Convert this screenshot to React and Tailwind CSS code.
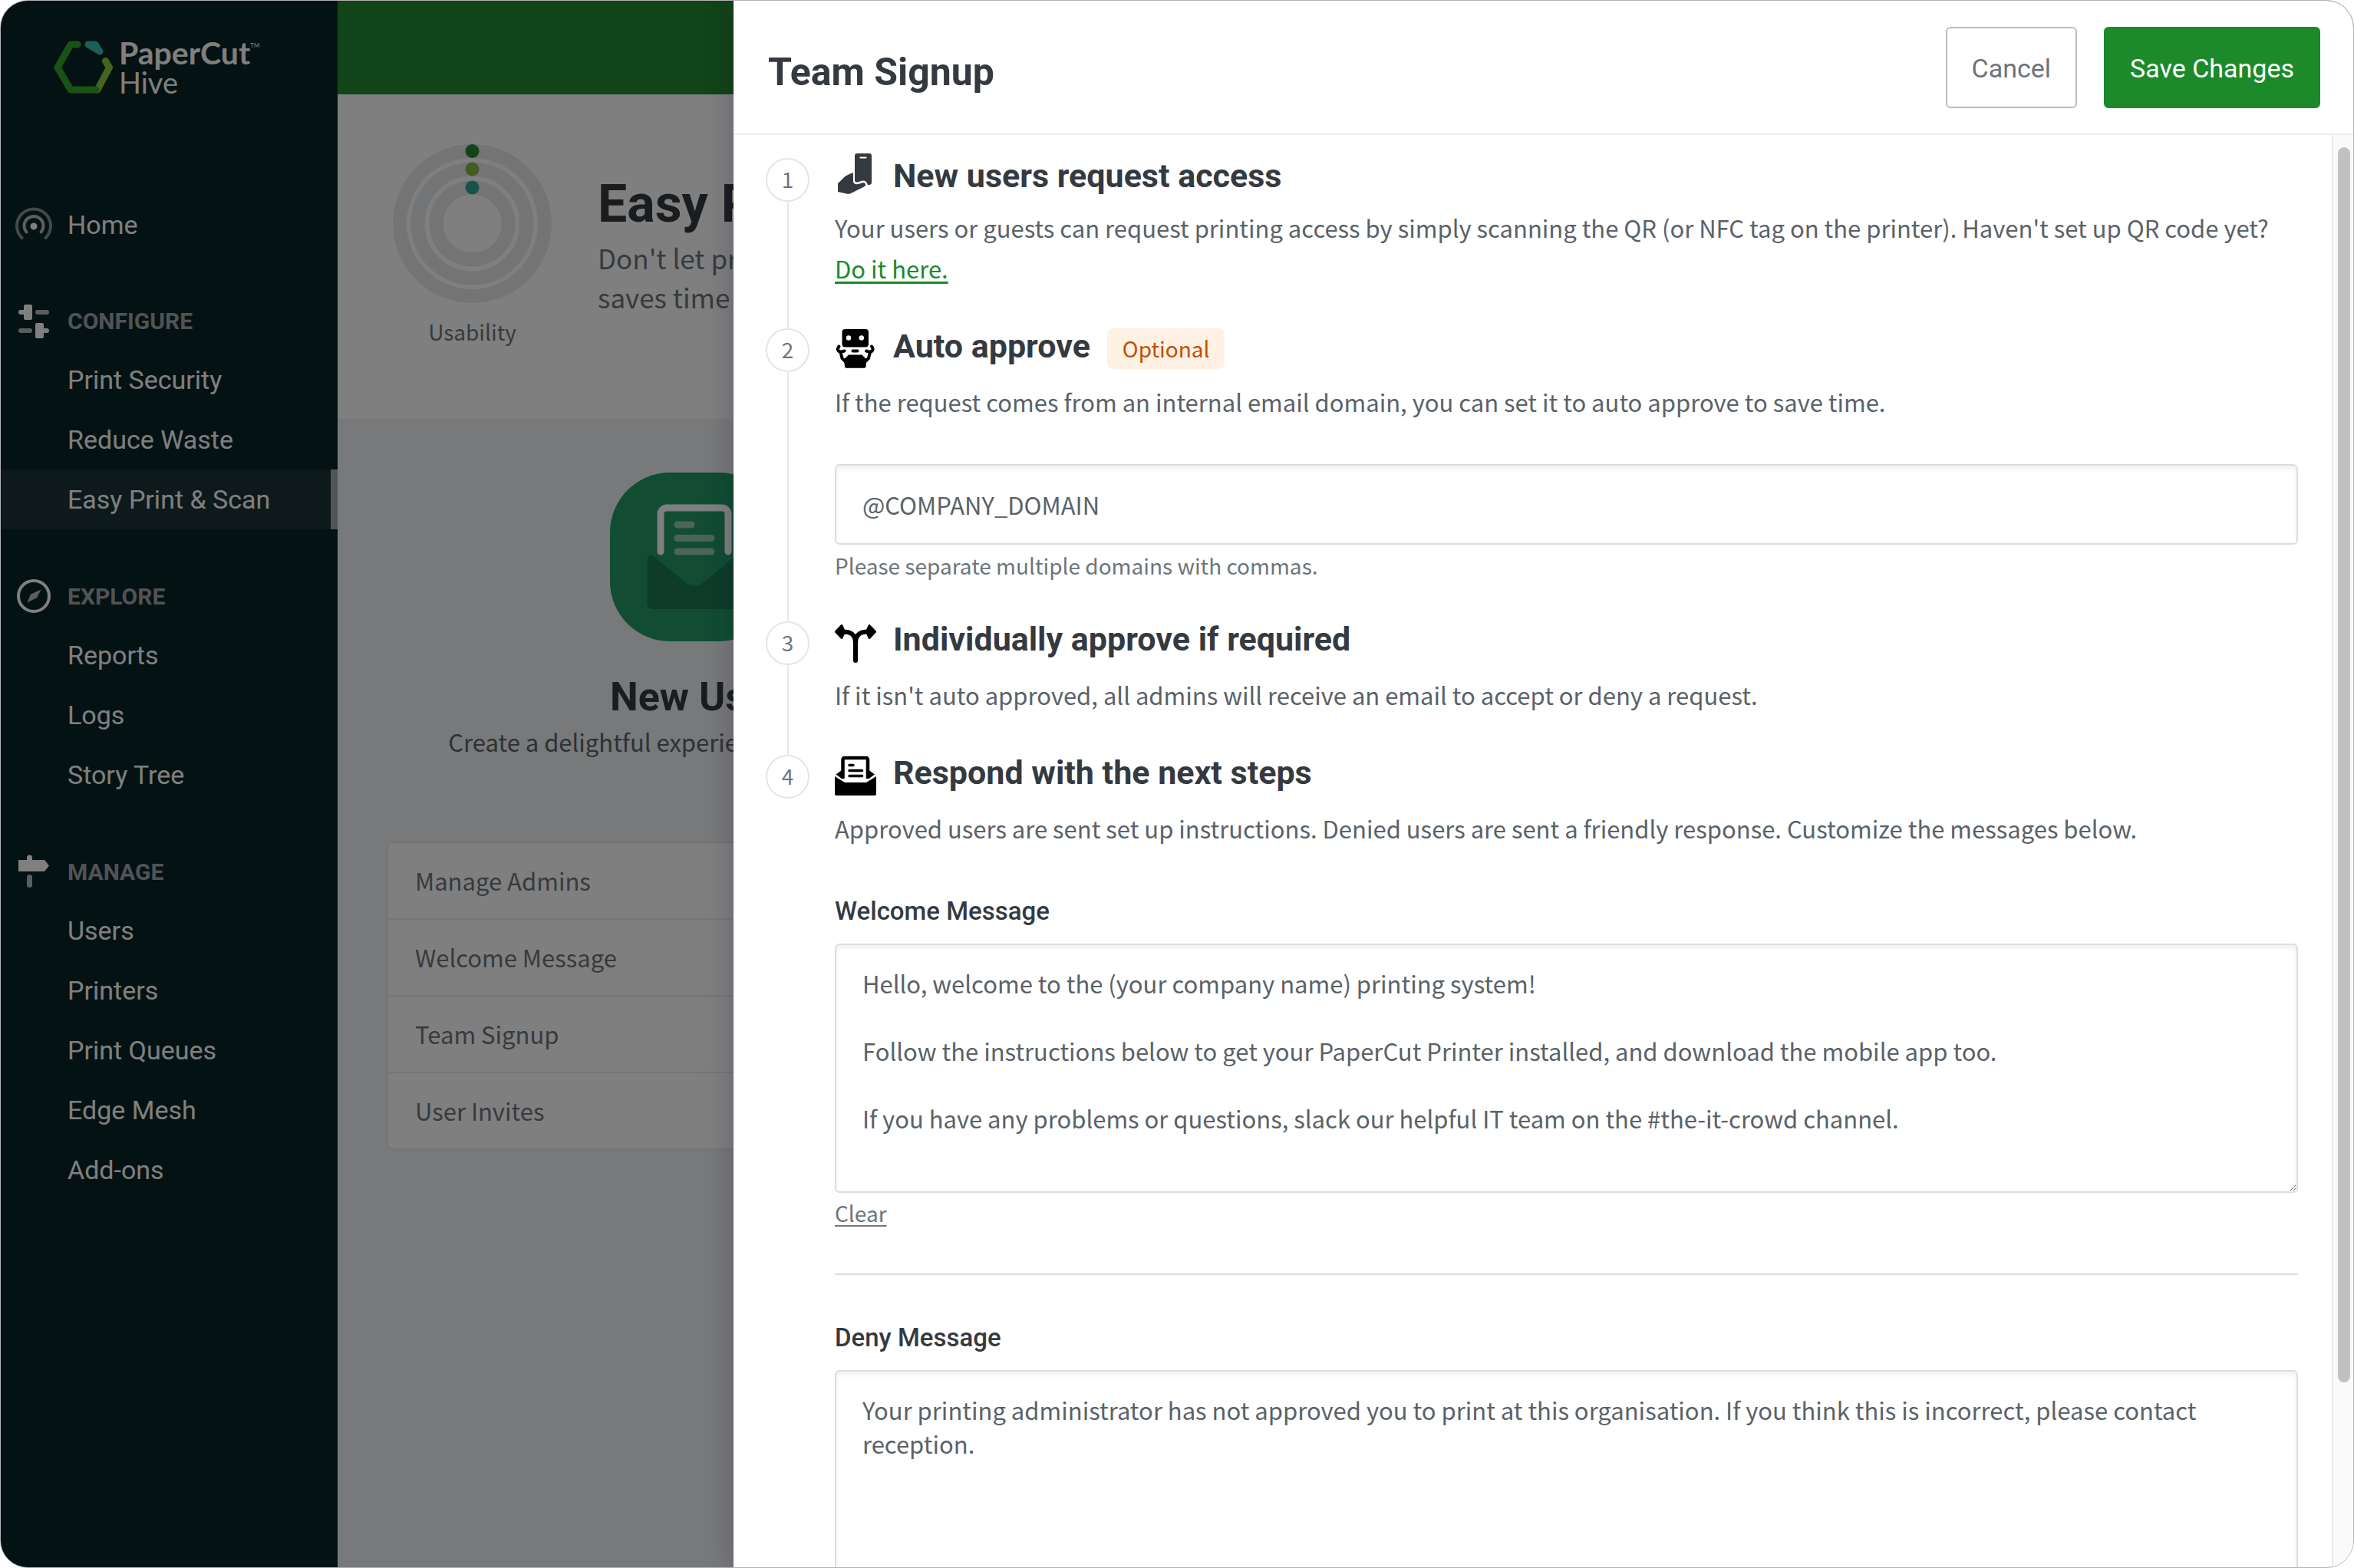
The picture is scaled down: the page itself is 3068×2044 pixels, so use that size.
import { useState } from "react"

const navGroups = [
  { title: "CONFIGURE", icon: SlidersIcon, items: ["Print Security", "Reduce Waste", "Easy Print & Scan"] },
  { title: "EXPLORE", icon: CompassIcon, items: ["Reports", "Logs", "Story Tree"] },
  { title: "MANAGE", icon: SignpostIcon, items: ["Users", "Printers", "Print Queues", "Edge Mesh", "Add-ons"] },
]

const shortcuts = ["Manage Admins", "Welcome Message", "Team Signup", "User Invites"]

const defaultWelcome = `Hello, welcome to the (your company name) printing system!

Follow the instructions below to get your PaperCut Printer installed, and download the mobile app too.

If you have any problems or questions, slack our helpful IT team on the #the-it-crowd channel.`

const defaultDeny =
  "Your printing administrator has not approved you to print at this organisation. If you think this is incorrect, please contact reception."

/* ---------- icons ---------- */

function HiveLogo() {
  return (
    <svg className="w-[77px] h-[70px] shrink-0" viewBox="0 0 77 70" fill="none" strokeLinecap="round" strokeLinejoin="round" strokeWidth="9">
      <path d="M57 64 L72.500 35 L67.500 26.500" stroke="#8cc63f" />
      <path d="M31 5 H22 L5 35 L22 64 H55" stroke="#32a52b" />
      <path d="M45 5 H54 L60 14 Z" stroke="#37bfb0" fill="#37bfb0" />
    </svg>
  )
}

function HomeIcon() {
  return (
    <svg className="w-[48px] h-[48px]" viewBox="0 0 48 48" fill="none" stroke="white" strokeLinecap="round">
      <circle cx="24" cy="26" r="4.500" fill="white" stroke="none" />
      <path d="M14.500 33.500 A12.500 12.500 0 1 1 33.500 33.500" strokeWidth="4" strokeOpacity="0.7" />
      <path d="M8.500 41 A22 22 0 1 1 39.500 41" strokeWidth="4" strokeOpacity="0.5" />
    </svg>
  )
}

function SlidersIcon() {
  return (
    <svg className="w-[48px] h-[48px]" viewBox="0 0 48 48" fill="white">
      <rect x="4" y="10" width="12" height="6" rx="3" />
      <rect x="11" y="3" width="11" height="20" rx="2" />
      <rect x="26" y="10" width="18" height="6" rx="3" fillOpacity="0.7" />
      <rect x="4" y="34" width="18" height="6" rx="3" fillOpacity="0.7" />
      <rect x="26" y="27" width="11" height="20" rx="2" />
      <rect x="32" y="34" width="12" height="6" rx="3" />
    </svg>
  )
}

function CompassIcon() {
  return (
    <svg className="w-[48px] h-[48px]" viewBox="0 0 48 48">
      <circle cx="24" cy="24" r="20" fill="none" stroke="white" strokeWidth="4" />
      <path d="M33 16 L28 26 L16 32 L20 22 Z" fill="white" fillOpacity="0.7" stroke="white" strokeOpacity="0.3" strokeLinejoin="round" />
    </svg>
  )
}

function SignpostIcon() {
  return (
    <svg className="w-[48px] h-[48px]" viewBox="0 0 48 48" fill="white">
      <path d="M4 9 H15 V6 a3.500 3.500 0 0 1 7 0 V9 H38 L44 16.500 L38 24 H4 Z" />
      <rect x="15" y="28" width="7" height="17" rx="3.500" fillOpacity="0.7" />
    </svg>
  )
}

function PhoneHandIcon() {
  return (
    <svg className="w-[54px] h-[54px] shrink-0 overflow-visible fill-[#343a40]" viewBox="0 7 54 54">
      <path d="M29 1 H45 a3 3 0 0 1 3 3 V39 c0 2 -2 3.500 -5 3 c-1 -4 -3.500 -6 -7 -5.500 c-3.500 1 -6 2.500 -8 2 c-1.500 -0.500 -2 -1 -2 -2.500 V4 a3 3 0 0 1 3 -3 Z" />
      <path d="M33.500 6.500 H40.500" stroke="white" strokeWidth="2.200" strokeLinecap="round" />
      <path d="M24 27 V38 c1 3.500 5 4 8 2.500 l5 -1.500 c3 0 4 3 2 5 L21 53 c-2 1 -4 1 -6 0.500 L4 51 V40 c4 -3.500 7 -7 10 -9.500 c3 -2 7 -3 10 -4.500 Z" />
    </svg>
  )
}

function RobotIcon() {
  return (
    <svg className="w-[54px] h-[54px] shrink-0" viewBox="0 0 54 54">
      <rect x="9.500" y="1" width="34.500" height="23.500" rx="4" />
      <circle cx="18" cy="12.500" r="3.200" fill="white" />
      <circle cx="34.800" cy="12.500" r="3.200" fill="white" />
      <rect x="21.500" y="27.500" width="10" height="4" rx="2" />
      <path d="M18 34.500 H35.500 L41.500 40.500 L40.500 50 a2 2 0 0 1 -2 1.800 H15 a2 2 0 0 1 -2 -1.800 L12 40.500 Z" />
      <g fill="none" stroke="black" strokeWidth="4" strokeLinecap="round" strokeLinejoin="round">
        <path d="M5.500 23.500 C2 28 5 31 8.500 30.500 L12.500 29.500 M7.500 31 L9.500 39 L14.500 44" />
        <path d="M48 23.500 C51.500 28 48.500 31 45 30.500 L41 29.500 M46 31 L44 39 L39 44" />
      </g>
    </svg>
  )
}

function ForkIcon() {
  return (
    <svg className="w-[54px] h-[54px] shrink-0" viewBox="0 0 54 54">
      <g stroke="black" strokeWidth="3" strokeLinejoin="round">
        <path d="M1.500 13.500 L9 5.500 L12.500 13.500 L9 21.500 Z" />
        <path d="M52.500 13.500 L45 5.500 L41.500 13.500 L45 21.500 Z" />
      </g>
      <path d="M10 13.500 C20 13.500 27 16 27 29 V51 M27 29 C27 16 34 13.500 44 13.500" fill="none" stroke="black" strokeWidth="6" strokeLinecap="round" />
    </svg>
  )
}

function InboxIcon() {
  return (
    <svg className="w-[54px] h-[54px] shrink-0" viewBox="0 0 54 54">
      <path d="M10.500 31 V6 a2 2 0 0 1 2 -2 H41 a2 2 0 0 1 2 2 V31" fill="none" stroke="black" strokeWidth="4.500" />
      <path d="M9 20 L1.500 25.500 L9 31 Z M44.500 20 L52 25.500 L44.500 31 Z" />
      <path d="M19 13.500 H24 M19 20.500 H35.500 M19 27.500 H35.500" stroke="black" strokeWidth="3.500" strokeLinecap="round" />
      <path d="M0 28 L13 36 H41 L54 28 V51 a2 2 0 0 1 -2 2 H2 a2 2 0 0 1 -2 -2 Z" />
    </svg>
  )
}

function UsabilityRings() {
  return (
    <svg className="w-[207px] h-[207px]" viewBox="0 0 207 207" fill="none">
      <g stroke="#e7e9ec" strokeWidth="18">
        <circle cx="103.500" cy="103.500" r="94.500" />
        <circle cx="103.500" cy="103.500" r="71" />
        <circle cx="103.500" cy="103.500" r="47" />
      </g>
      <circle cx="103.500" cy="9" r="9" fill="#228830" />
      <circle cx="103.500" cy="32.500" r="9" fill="#84bb3e" />
      <circle cx="103.500" cy="56.500" r="9" fill="#33a597" />
    </svg>
  )
}

function LetterTile() {
  return (
    <svg className="w-[220px] h-[220px]" viewBox="0 0 220 220" fill="none">
      <rect width="220" height="220" rx="78" fill="#229866" />
      <path d="M48.500 114 c0 -6 4 -7 8 -5 L98 143 c8 6 16 6 24 0 L163.500 109 c4 -2 8 -1 8 5 V170 a8 8 0 0 1 -8 8 H56.500 a8 8 0 0 1 -8 -8 Z" fill="#1c7852" />
      <path d="M66 103 V54 a8 8 0 0 1 8 -8 H146 a8 8 0 0 1 8 8 V103" stroke="white" strokeWidth="9" strokeLinecap="round" />
      <path d="M88 68 H106 M88 85.500 H132 M88 103 H132" stroke="#98cbb2" strokeWidth="9" strokeLinecap="round" />
    </svg>
  )
}

/* ---------- page behind the drawer ---------- */

function Sidebar() {
  return (
    <aside className="w-[439px] shrink-0 bg-[#0a2426] text-white font-['Roboto',sans-serif] text-[34px]">
      <div className="flex items-center gap-[8px] h-[70px] mt-[52px] ml-[69px] font-['Lato',sans-serif]">
        <HiveLogo />
        <div className="leading-[39px]">
          <div className="flex text-[41px] font-bold">
            PaperCut<span className="text-[8px] leading-[20px] font-normal">TM</span>
          </div>
          <div className="text-[38px]">Hive</div>
        </div>
      </div>
      <nav className="flex flex-col gap-[49px] mt-[132px]">
        <a href="#home" className="flex items-center gap-[20px] h-[76px] pl-[19px]">
          <HomeIcon />
          Home
        </a>
        {navGroups.map(group => (
          <div key={group.title}>
            <h2 className="flex items-center gap-[20px] h-[76px] pl-[19px] text-[30px] font-bold">
              <group.icon />
              <span className="text-[#a0a7aa]">{group.title}</span>
            </h2>
            {group.items.map(item => (
              <a
                key={item}
                href="#nav"
                className={
                  item === "Easy Print & Scan"
                    ? "flex items-center h-[78px] pl-[87px] bg-white/7 border-r-[9px] border-white/60"
                    : "flex items-center h-[78px] pl-[87px]"
                }
              >
                {item}
              </a>
            ))}
          </div>
        ))}
      </nav>
    </aside>
  )
}

function MainContent() {
  return (
    <main className="flex-1 min-w-0 bg-[#f0f2f5] font-['Noto_Sans_CJK_SC',sans-serif] text-[#6e757d]">
      <div className="h-[122px] bg-[#228830]" />
      <section className="flex gap-[60px] h-[423px] pt-[65px] pl-[72px] bg-white">
        <div className="flex flex-col items-center gap-[15px]">
          <UsabilityRings />
          <span className="text-[28px] leading-[44px]">Usability</span>
        </div>
        <div className="pt-[36px]">
          <h1 className="font-['Roboto',sans-serif] text-[68px] leading-[84px] font-bold text-[#343a40]">Easy Print & Scan</h1>
          <p className="pt-[2px] text-[35px] leading-[51px]">
            Don't let printing slow you down. Easy printing
            <br />
            saves time for everyone in the team.
          </p>
        </div>
      </section>
      <section className="px-[64px]">
        <div className="flex flex-col items-center w-[802px] pt-[70px] whitespace-nowrap">
          <LetterTile />
          <h2 className="w-[220px] mt-[38px] font-['Roboto',sans-serif] text-[52px] leading-[70px] font-bold text-[#343a40]">New Users</h2>
          <p className="text-[31px] leading-[46px] text-[#5a6268]">Create a delightful experience for your users.</p>
        </div>
        <ul className="mt-[107px] bg-white border-2 border-[#e2e6ea] rounded-lg text-[31px] divide-y-2 divide-[#e9ecef]">
          {shortcuts.map(label => (
            <li key={label}>
              <a href="#shortcut" className="flex items-center h-[98px] px-[35px]">{label}</a>
            </li>
          ))}
        </ul>
      </section>
    </main>
  )
}

/* ---------- drawer ---------- */

function Step({ number, icon: Icon, title, badge, last, compact, children }) {
  return (
    <li className="flex gap-[33px]">
      <div className="flex flex-col items-center shrink-0 w-[57px]">
        <span className="flex items-center justify-center w-[57px] h-[57px] pb-[3px] rounded-full border-2 border-[#e1e6e9] text-[28px] leading-[40px] text-[#6c757d]">{number}</span>
        {!last && <span className="flex-1 w-[2px] bg-[#e6e9eb]" />}
      </div>
      <div className={last ? "flex-1 min-w-0" : "flex-1 min-w-0 pb-[52px]"}>
        <div className={compact ? "flex gap-[22px] h-[64px]" : "flex gap-[22px] h-[69px]"}>
          <Icon />
          <h3 className="font-['Roboto',sans-serif] text-[43px] leading-[46px] font-bold text-[#343a40]">{title}</h3>
          {badge && <span className="h-[53px] px-[20px] rounded-lg bg-[#fff1e3] text-[28px] leading-[53px] text-[#c04f00]">{badge}</span>}
        </div>
        {children}
      </div>
    </li>
  )
}

export default function App() {
  const [domain, setDomain] = useState("@COMPANY_DOMAIN")
  const [welcome, setWelcome] = useState(defaultWelcome)
  const [deny, setDeny] = useState(defaultDeny)

  const fieldClass =
    "block w-full border-2 border-[#dadee2] rounded-md bg-white px-[34px] text-[31px] leading-[44px] text-[#5a6268] shadow-[inset_0_4px_6px_rgba(0,0,0,0.06)] focus:outline-none"
  const labelClass = "block mb-[20px] font-['Roboto',sans-serif] text-[33px] leading-[44px] font-medium text-[#343a40]"
  const buttonClass = "h-[106px] px-[32px] pt-[4px] border-2 rounded-md font-['Roboto',sans-serif] text-[34px]"

  return (
    <div className="relative flex h-screen overflow-hidden rounded-[36px] border border-[#b3b3b3] bg-white">
      <Sidebar />
      <MainContent />
      <div className="absolute inset-0 bg-black/50" />

      <div
        role="dialog"
        aria-label="Team Signup"
        className="absolute inset-y-0 right-0 left-[955px] flex flex-col bg-white font-['Noto_Sans_CJK_SC',sans-serif] text-[31px] leading-[53px] text-[#5a6268] shadow-[0_0_36px_rgba(20,20,50,0.25)]"
      >
        <header className="flex items-center gap-[35px] h-[175px] pl-[45px] pr-[43px] border-b-2 border-[#e9eef1]">
          <h2 className="flex-1 pt-[12px] font-['Roboto',sans-serif] text-[50px] leading-[64px] font-bold text-[#343a40]">Team Signup</h2>
          <button type="button" className={buttonClass + " border-[#b5bcc2] text-[#6c757d]"}>Cancel</button>
          <button type="submit" form="signup" className={buttonClass + " border-[#1c8a2b] bg-[#1c8a2b] text-white"}>Save Changes</button>
        </header>

        <div className="flex flex-1 min-h-0">
          <form id="signup" className="flex-1 min-w-0 overflow-hidden pt-[30px] pl-[42px] pr-[44px]" onSubmit={e => e.preventDefault()}>
            <ol>
              <Step number={1} icon={PhoneHandIcon} title="New users request access" compact>
                <p>
                  Your users or guests can request printing access by simply scanning the QR (or NFC tag on the printer). Haven't set up QR code yet?{" "}
                  <a href="#qr" className="whitespace-nowrap text-[#1c8a2b] underline decoration-[3px] underline-offset-[4px]">Do it here.</a>
                </p>
              </Step>
              <Step number={2} icon={RobotIcon} title="Auto approve" badge="Optional">
                <label htmlFor="domain" className="block">
                  If the request comes from an internal email domain, you can set it to auto approve to save time.
                </label>
                <input id="domain" type="text" value={domain} onChange={e => setDomain(e.target.value)} className={fieldClass + " h-[105px] mt-[55px]"} />
                <p className="mt-[6px] text-[28px] leading-[42px] text-[#6c757d]">Please separate multiple domains with commas.</p>
              </Step>
              <Step number={3} icon={ForkIcon} title="Individually approve if required">
                <p>If it isn't auto approved, all admins will receive an email to accept or deny a request.</p>
              </Step>
              <Step number={4} icon={InboxIcon} title="Respond with the next steps" last>
                <p className="mb-[60px]">Approved users are sent set up instructions. Denied users are sent a friendly response. Customize the messages below.</p>
                <label htmlFor="welcome" className={labelClass}>Welcome Message</label>
                <textarea id="welcome" value={welcome} onChange={e => setWelcome(e.target.value)} className={fieldClass + " h-[325px] py-[28px]"} />
                <button type="button" onClick={() => setWelcome("")} className="block mt-[4px] text-[28px] leading-[44px] text-[#6c757d] underline decoration-2 underline-offset-[4px]">
                  Clear
                </button>
                <hr className="mt-[57px] mb-[60px] border-t-2 border-[#dadee2]" />
                <label htmlFor="deny" className={labelClass}>Deny Message</label>
                <textarea id="deny" value={deny} onChange={e => setDeny(e.target.value)} className={fieldClass + " h-[325px] py-[28px]"} />
              </Step>
            </ol>
          </form>
          {/* scrollbar */}
          <div className="w-[28px] pt-[16px] pl-[6px] border-l-2 border-[#e8e8e8] bg-[#fafafa]">
            <div className="w-[16px] h-[87%] rounded-full bg-[#c1c1c1]" />
          </div>
        </div>
      </div>
    </div>
  )
}
